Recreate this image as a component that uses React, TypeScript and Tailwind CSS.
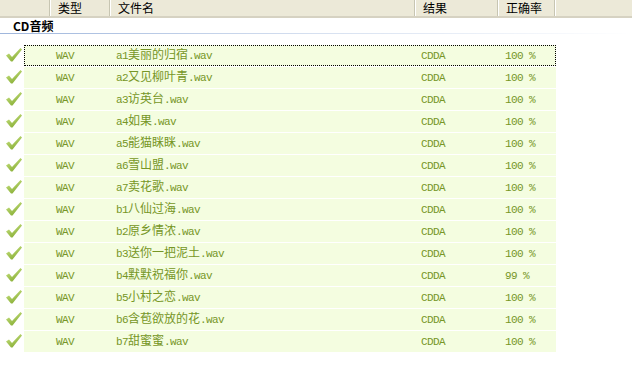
const ROWS: [string, string][] = [
  ["a1美丽的归宿.wav", "100 %"],
  ["a2又见柳叶青.wav", "100 %"],
  ["a3访英台.wav", "100 %"],
  ["a4如果.wav", "100 %"],
  ["a5能猫眯眯.wav", "100 %"],
  ["a6雪山盟.wav", "100 %"],
  ["a7卖花歌.wav", "100 %"],
  ["b1八仙过海.wav", "100 %"],
  ["b2原乡情浓.wav", "100 %"],
  ["b3送你一把泥土.wav", "100 %"],
  ["b4默默祝福你.wav", "99 %"],
  ["b5小村之恋.wav", "100 %"],
  ["b6含苞欲放的花.wav", "100 %"],
  ["b7甜蜜蜜.wav", "100 %"],
];

// ascii runs in a narrow mono, CJK runs in Noto
function Mixed({ text }: { text: string }) {
  const parts = text.match(/[\x00-\x7f]+|[^\x00-\x7f]+/g) ?? [];
  return (
    <>
      {parts.map((p, i) =>
        /^[\x00-\x7f]/.test(p) ? (
          <span key={i} className="font-['Liberation_Mono',monospace] text-[11px] tracking-[-0.6px] whitespace-pre">
            {p}
          </span>
        ) : (
          <span key={i} className="font-['Noto_Sans_CJK_SC',sans-serif] text-[12px]">
            {p}
          </span>
        ),
      )}
    </>
  );
}

function Check() {
  return (
    <svg width="18" height="16" viewBox="0 0 18 16">
      <defs>
        <linearGradient id="ck" x1="0" y1="0" x2="0.6" y2="1">
          <stop offset="0" stopColor="#d2ea8c" />
          <stop offset="1" stopColor="#86ad34" />
        </linearGradient>
      </defs>
      <path d="M1 8.5 L4 6.5 L7 10 L15.5 1 L17 2.5 L7.5 14.5 L6 14.5 Z" fill="url(#ck)" />
    </svg>
  );
}

function HeadCell({ w, label }: { w: string; label?: string }) {
  return (
    <div className={`${w} h-full flex items-center pl-[8px] border-r border-[#c7c5b2] shadow-[1px_0_0_#ffffff]`}>
      {label}
    </div>
  );
}

export default function App() {
  return (
    <div className="w-[632px] h-[368px] bg-white overflow-hidden relative font-['Noto_Sans_CJK_SC',sans-serif] text-[12px]">
      <div className="h-[18px] bg-[#ece9d8] border-b-2 border-[#d6d2c2] flex text-black leading-none">
        <HeadCell w="w-[50px]" />
        <HeadCell w="w-[60px]" label="类型" />
        <HeadCell w="w-[305px]" label="文件名" />
        <HeadCell w="w-[83px]" label="结果" />
        <HeadCell w="w-[57px]" label="正确率" />
      </div>
      <div className="h-[15px] pl-[13px] flex items-center font-bold text-black leading-none">CD音频</div>
      <div className="h-px bg-gradient-to-r from-[#9fb6dc] via-[#d6e0f0] to-white" />
      <div className="h-[10px]" />
      <div className="flex flex-col">
        {ROWS.map(([name, rate], i) => (
          <div key={name} className="h-[22px] flex items-center">
            <div className="w-[24px] flex justify-center pl-[4px]">
              <Check />
            </div>
            <div
              className={`w-[532px] h-[21px] bg-[#f4fde0] flex items-center text-[#769626] leading-none ${
                i === 0 ? "border border-dotted border-black" : ""
              }`}
            >
              <div className={`${i === 0 ? "w-[31px]" : "w-[32px]"}`} />
              <div className="w-[60px]">
                <Mixed text="WAV" />
              </div>
              <div className="w-[305px]">
                <Mixed text={name} />
              </div>
              <div className="w-[84px]">
                <Mixed text="CDDA" />
              </div>
              <div>
                <Mixed text={rate} />
              </div>
            </div>
          </div>
        ))}
      </div>
    </div>
  );
}
